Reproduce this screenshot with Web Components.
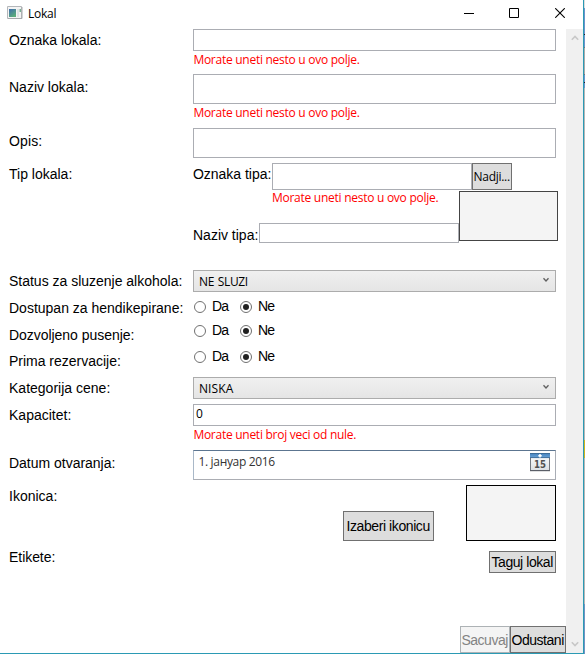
<!DOCTYPE html>
<html lang="sr">
<head>
<meta charset="utf-8">
<title>Lokal</title>
<style>
html,body{margin:0;height:654px;overflow:hidden;background:#fff}
body{font-family:"Liberation Sans",Arial,sans-serif;font-size:14px;color:#000}
</style>
</head>
<body>
<lokal-window></lokal-window>
<script>
const define = (name, css, html, ready) => customElements.define(name, class extends HTMLElement {
  constructor() {
    super();
    this.attachShadow({mode: 'open'}).innerHTML = `<style>*{box-sizing:border-box}:host{box-sizing:border-box}${css}</style>${html}`;
  }
  connectedCallback() { if (ready) ready(this); }
});

// Single line of text, tracked so that its advance fits the "w" attribute.
define('fit-text', `
  :host{display:block;height:16px;line-height:16px;white-space:nowrap;flex:none}
  :host([ui]){font-family:"Open Sans","Noto Sans",sans-serif;font-size:12px}
  span{display:inline-block}`,
  '<span><slot></slot></span>', el => {
    const w = +el.getAttribute('w');
    el.style.width = w + 'px';
    const s = el.shadowRoot.querySelector('span');
    s.style.letterSpacing = (w - 0.7 - s.getBoundingClientRect().width) / el.textContent.length + 'px';
  });

define('form-row', `
  :host{display:grid;grid-template-columns:184px 373px;align-items:start}
  .c{min-width:0}`,
  '<slot name="label"></slot><div class="c"><slot></slot></div>', el => {
    el.style.height = el.getAttribute('h') + 'px';
    el.querySelector('[slot=label]').style.paddingTop = (el.getAttribute('ly') || 0) + 'px';
    el.shadowRoot.querySelector('.c').style.paddingTop = (el.getAttribute('cy') || 0) + 'px';
  });

define('text-box', `
  :host{display:block;width:var(--w,363px);height:var(--h,22px);border:1px solid #abadb3;background:#fff;padding:1px 2px;flex:none}`,
  '<slot></slot>');

define('error-text', `
  :host{display:block;color:#f00;padding:1px 0 0 .4px}`,
  '<slot></slot>');

define('combo-box', `
  :host{display:flex;justify-content:space-between;width:363px;height:22px;border:1px solid #acacac;background:linear-gradient(#f0f0f0,#e5e5e5);padding:3px 5px 0 5px}
  svg{display:block;margin-top:2px}`,
  '<slot></slot><svg width="8" height="8" viewBox="0 0 8 8"><path d="M1.5 2.2 4 5 6.5 2.2" fill="none" stroke="#606060" stroke-width="1.3"/></svg>');

define('radio-button', `
  :host{display:flex;align-items:center;gap:6px;height:16px;width:46px}
  i{width:12px;height:12px;border:1px solid #707070;border-radius:50%;background:#fff;display:grid;place-items:center;flex:none}
  :host([checked]) i::after{content:"";width:6px;height:6px;border-radius:50%;background:#212121}
  ::slotted(*){margin-top:-2px}`,
  '<i></i><slot></slot>');

define('yes-no', ':host{display:flex;padding-left:1px}fit-text{margin-top:-2px}',
  '<radio-button><fit-text w="17">Da</fit-text></radio-button><radio-button checked><fit-text w="17">Ne</fit-text></radio-button>');

define('push-button', `
  :host{display:flex;align-items:center;justify-content:center;width:var(--w);height:var(--h);border:1px solid #707070;background:#ddd;flex:none}
  :host([disabled]){background:#f4f4f4;border-color:#adb2b5;color:#838383}`,
  '<slot></slot>');

define('picture-box', `
  :host{display:block;width:var(--w);height:var(--h);background:#f4f4f4;border:1px solid var(--c,#000);flex:none}`, '');

define('date-picker', `
  :host{display:flex;justify-content:space-between;width:363px;height:30px;border:1px solid;border-color:#5c7590 #a9adb5 #abadb3 #a9b8c8;padding:3px 5px 0 4.5px;color:#333}
  svg{display:block;margin-top:-1px}`,
  `<slot></slot><svg width="20" height="19" viewBox="0 0 20 19">
    <defs><linearGradient id="g" x2="0" y2="1"><stop offset="0" stop-color="#fff"/><stop offset="1" stop-color="#dcdfe3"/></linearGradient>
    <linearGradient id="b" x2="0" y2="1"><stop offset="0" stop-color="#4380bd"/><stop offset="1" stop-color="#6aa3d6"/></linearGradient></defs>
    <rect x=".5" y=".5" width="19" height="17" fill="url(#g)" stroke="#737880"/>
    <path d="M0 17.7h20" stroke="#555b63" stroke-width="1"/>
    <path d="M0 0h20v5H0z" fill="url(#b)"/><path d="M0 .5h20M0 4.6h20" stroke="#38658f" stroke-width=".8"/>
    <path d="M10 1v3.4M8.3 2.7h3.4" stroke="#fff" stroke-width="1.5"/>
    <text x="10" y="15.3" text-anchor="middle" font-family="DejaVu Sans" font-weight="bold" font-size="9.6" textLength="12" lengthAdjust="spacingAndGlyphs" fill="#505050">15</text></svg>`);

define('title-bar', `
  :host{display:grid;grid-template-columns:21px 1fr auto;height:29px;padding:0 18px 0 7px}
  .i{margin-top:6px}.t{margin-top:6px}svg{display:block}
  .w{display:flex;gap:35px;padding-top:8px}.x{margin-left:1px}`,
  `<svg class="i" width="16" height="14" viewBox="0 0 16 14">
    <defs><linearGradient id="p" x2=".6" y2="1"><stop offset="0" stop-color="#3f6cae"/><stop offset="1" stop-color="#5bad7b"/></linearGradient></defs>
    <path d="M.5.5h14v12H.5z" fill="#f4f4f4" stroke="#b4b7ba"/><path d="M1 12.5h14V1" fill="none" stroke="#a6a9ac"/>
    <path d="M2 3h7v8H2z" fill="url(#p)"/><path d="M10 3h2v8h-2z" fill="#dfe3e5"/><path d="M12.5 3h1.5v3h-1.5z" fill="#78b193"/></svg>
  <fit-text class="t" ui w="29">Lokal</fit-text>
  <div class="w">
    <svg width="10" height="11" viewBox="0 0 10 11"><path d="M0 5.5h10" stroke="#000"/></svg>
    <svg width="10" height="10" viewBox="0 0 10 10"><path d="M.5.5h9v9h-9z" fill="none" stroke="#000"/></svg>
    <svg class="x" width="10" height="10" viewBox="0 0 10 10"><path d="m.2.2 9.6 9.6M9.8.2.2 9.8" stroke="#000" stroke-width="1.1"/></svg>
  </div>`);

define('scroll-strip', `
  :host{display:flex;flex-direction:column;justify-content:space-between;align-items:center;width:17px;background:#f0f0f0;padding:5px 0}
  svg{display:block}path{fill:none;stroke:#c8c8c8;stroke-width:1.6}`,
  '<svg width="8" height="8" viewBox="0 0 8 8"><path d="M.8 5.8 4 2.4l3.2 3.4"/></svg><svg width="8" height="8" viewBox="0 0 8 8"><path d="M.8 2.2 4 5.6l3.2-3.4"/></svg>');

define('lokal-window', `
  :host{display:grid;grid-template-columns:584px 1px;height:654px}
  .win{display:flex;flex-direction:column;border-right:1px solid #2b9ab4;border-bottom:1px solid #2b9ab4;background:#fff;height:654px}
  .body{display:grid;grid-template-columns:566px 17px;flex:1}
  .form{padding-left:9px;display:flex;flex-direction:column}
  .flex{display:flex;align-items:flex-start}
  .tip{display:grid;grid-template-columns:266px 99px;width:365px}
  .foot{display:flex;justify-content:flex-end}
  .edge{background:linear-gradient(#ddd 8px,#6d92cc 8px 34px,#222 34px 35px,#6d92cc 35px 47px,#777 47px 48px,#aaa 48px 74px,#777 74px 75px,#6d92cc 75px 82px,#222 82px 83px,#6d92cc 83px 88px,#b5b5b5 88px 440px,#d0b41c 440px 458px,#b5b5b5 458px 604px,#7392c3 604px)}`,
  `<div class="win"><title-bar></title-bar><div class="body"><div class="form">
  <form-row h="45" ly="3"><fit-text slot="label" w="93">Oznaka lokala:</fit-text><text-box></text-box><error-text><fit-text ui w="167">Morate uneti nesto u ovo polje.</fit-text></error-text></form-row>
  <form-row h="54" ly="5"><fit-text slot="label" w="80">Naziv lokala:</fit-text><text-box style="--h:30px"></text-box><error-text><fit-text ui w="167">Morate uneti nesto u ovo polje.</fit-text></error-text></form-row>
  <form-row h="35" ly="5"><fit-text slot="label" w="34">Opis:</fit-text><text-box style="--h:30px"></text-box></form-row>
  <form-row h="107" ly="3"><fit-text slot="label" w="64">Tip lokala:</fit-text>
    <div class="flex" style="height:28px"><fit-text w="79" style="margin-top:3px">Oznaka tipa:</fit-text><text-box style="--w:200px;--h:27px"></text-box><push-button style="--w:40px;--h:27px"><fit-text ui w="37">Nadji...</fit-text></push-button></div>
    <div class="tip"><div><fit-text ui w="167" style="color:#f00;margin:-1px 0 0 79px">Morate uneti nesto u ovo polje.</fit-text>
      <div class="flex" style="padding-top:17px"><fit-text w="66" style="margin-top:4px">Naziv tipa:</fit-text><text-box style="--w:200px;--h:20px"></text-box></div></div>
      <picture-box style="--w:99px;--h:50px;--c:#444"></picture-box></div></form-row>
  <form-row h="28" ly="3"><fit-text slot="label" w="174">Status za sluzenje alkohola:</fit-text><combo-box><fit-text ui w="49.5" style="word-spacing:1px">NE SLUZI</fit-text></combo-box></form-row>
  <form-row h="26" ly="2" cy="1"><fit-text slot="label" w="175">Dostupan za hendikepirane:</fit-text><yes-no></yes-no></form-row>
  <form-row h="26" ly="3"><fit-text slot="label" w="126">Dozvoljeno pusenje:</fit-text><yes-no style="margin-top:-1px"></yes-no></form-row>
  <form-row h="27" ly="3"><fit-text slot="label" w="112.5">Prima rezervacije:</fit-text><yes-no style="margin-top:-1px"></yes-no></form-row>
  <form-row h="27" ly="3"><fit-text slot="label" w="102">Kategorija cene:</fit-text><combo-box><fit-text ui w="35">NISKA</fit-text></combo-box></form-row>
  <form-row h="46" ly="3"><fit-text slot="label" w="63">Kapacitet:</fit-text><text-box><fit-text ui w="7.5">0</fit-text></text-box><error-text><fit-text ui w="163.5">Morate uneti broj veci od nule.</fit-text></error-text></form-row>
  <form-row h="35" ly="5"><fit-text slot="label" w="107">Datum otvaranja:</fit-text><date-picker><fit-text ui w="77">1. јануар 2016</fit-text></date-picker></form-row>
  <form-row h="64" ly="3"><fit-text slot="label" w="49">Ikonica:</fit-text><div class="flex" style="align-items:flex-end;padding-left:150px;gap:32px"><push-button style="--w:91px;--h:30px"><fit-text w="84">Izaberi ikonicu</fit-text></push-button><picture-box style="--w:90px;--h:56px"></picture-box></div></form-row>
  <form-row h="77" cy="2"><fit-text slot="label" w="47">Etikete:</fit-text><push-button style="--w:67px;--h:22px;margin-left:296px"><fit-text w="62">Taguj lokal</fit-text></push-button></form-row>
  <div class="foot"><push-button disabled style="--w:50px;--h:27px"><fit-text w="47">Sacuvaj</fit-text></push-button><push-button style="--w:56px;--h:27px"><fit-text w="53">Odustani</fit-text></push-button></div>
  </div><scroll-strip></scroll-strip></div></div><div class="edge"></div>`);
</script>
</body>
</html>
